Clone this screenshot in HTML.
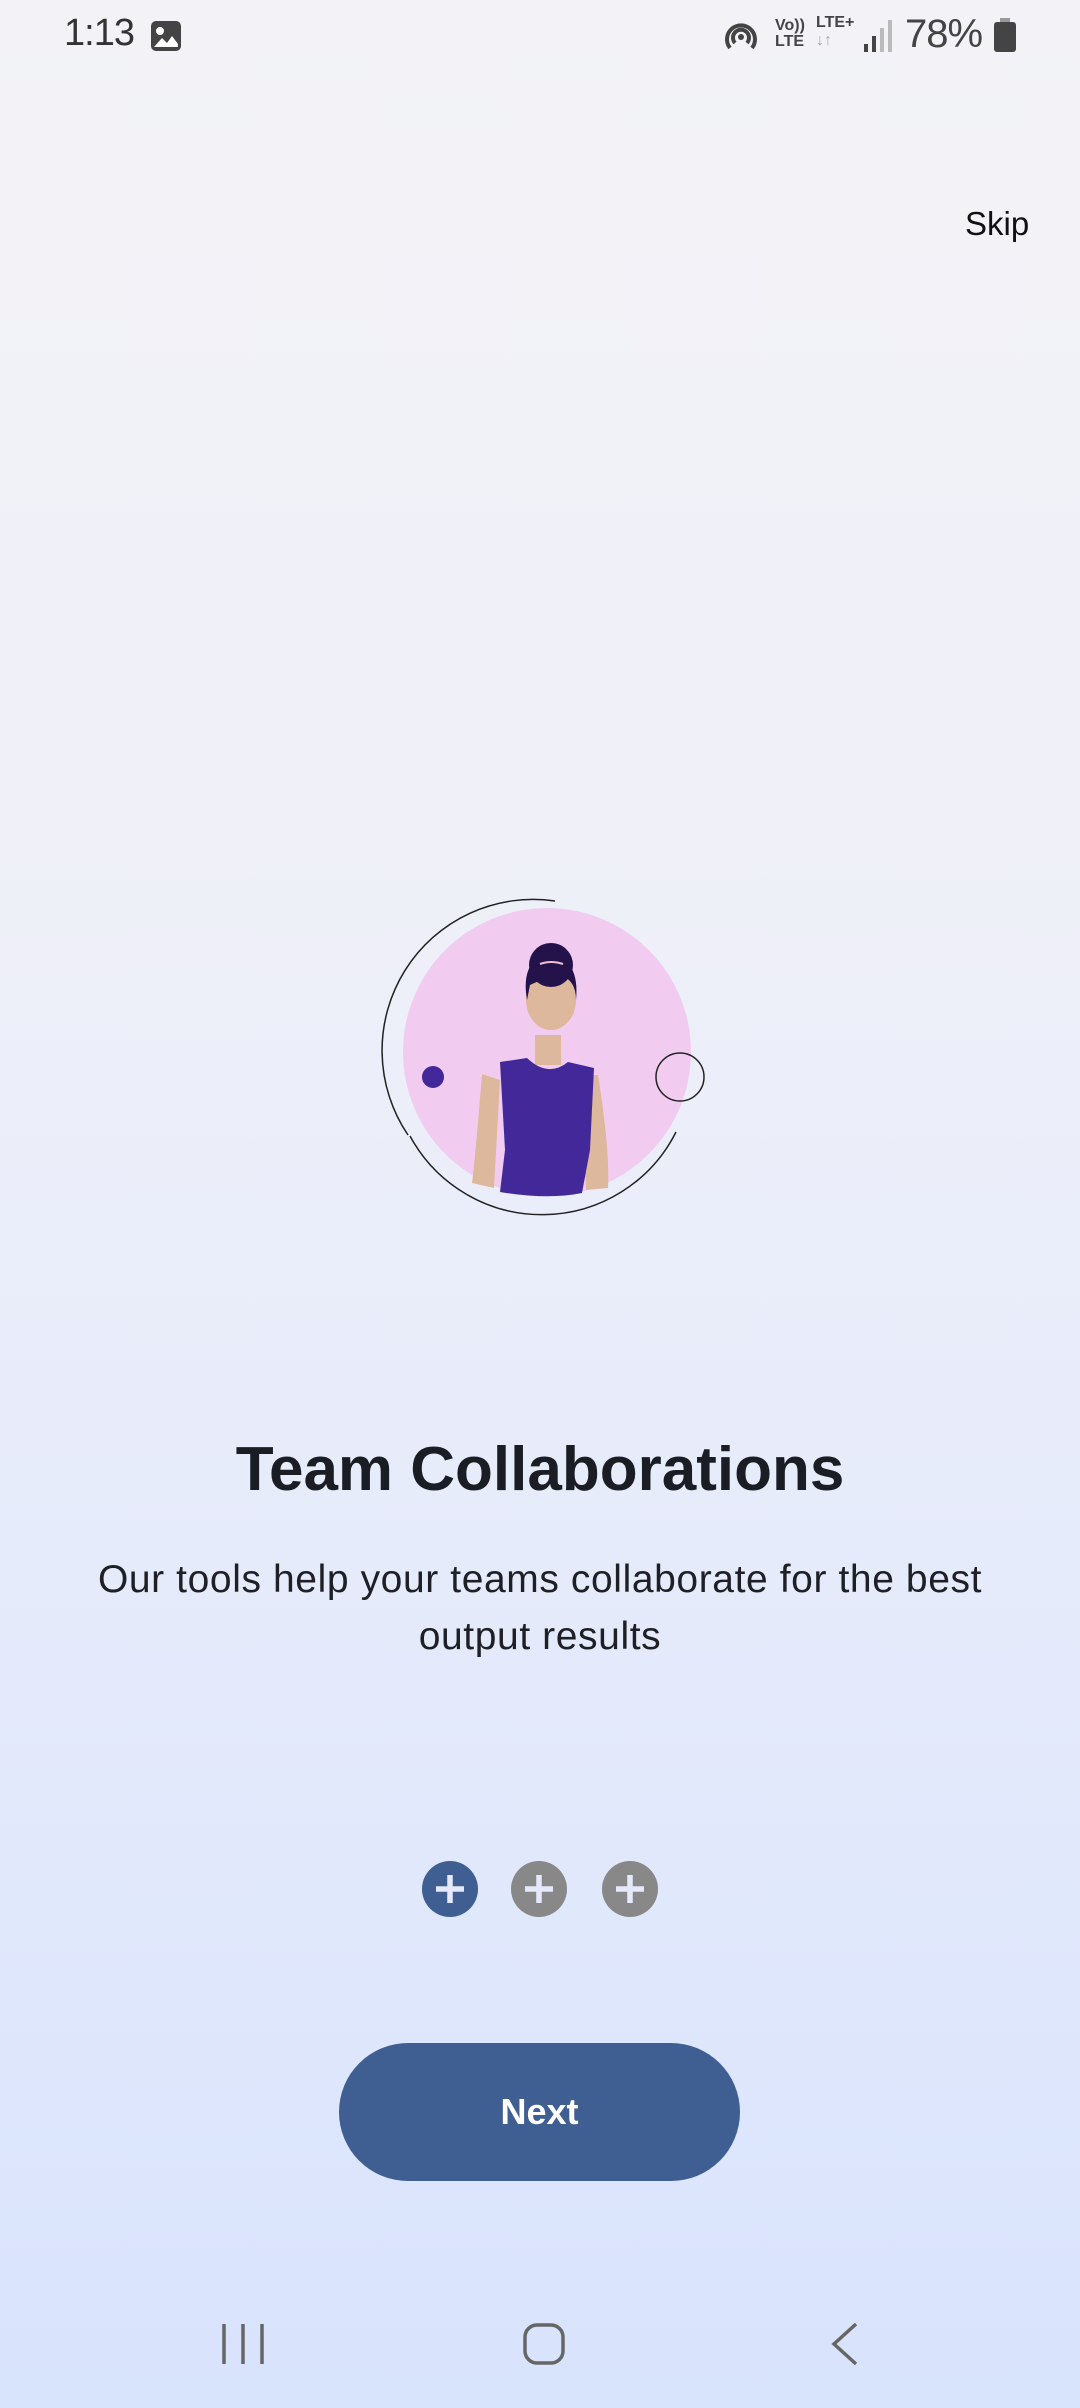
<!DOCTYPE html>
<html><head><meta charset="utf-8"><style>
body{margin:0;width:1080px;height:2408px;overflow:hidden;font-family:"Liberation Sans",Roboto,sans-serif;background:linear-gradient(180deg,#f3f3f7 0%,#eff0f8 35%,#e6ebfb 65%,#d8e3fc 100%);position:relative}
.a{position:absolute}
</style></head><body>
<div class="a" style="left:64px;top:12px;font-size:38px;color:#333;letter-spacing:-1px">1:13</div>
<svg class="a" style="left:150px;top:20px" width="32" height="32" viewBox="0 0 32 32"><rect x="1" y="1" width="30" height="30" rx="5" fill="#444"/><circle cx="10" cy="11" r="4" fill="#fff"/><path d="M4 27 L12 18 L17 23 L22 16 L28 24 L28 27 Z" fill="#fff"/></svg>
<svg class="a" style="left:722px;top:18px" width="38" height="36" viewBox="0 0 38 36"><g fill="none" stroke="#444" stroke-width="4"><path d="M8 30 A14 14 0 1 1 30 30"/><path d="M13 25 A8 8 0 1 1 25 25"/></g><circle cx="19" cy="19" r="3" fill="#444"/></svg>
<div class="a" style="left:775px;top:18px;font-size:16px;line-height:16px;color:#444;font-weight:bold">Vo))<br>LTE</div>
<div class="a" style="left:816px;top:14px;font-size:16px;line-height:18px;color:#444;font-weight:bold">LTE+<br><span style="color:#aaa">↓↑</span></div>
<svg class="a" style="left:864px;top:20px" width="30" height="32"><rect x="0" y="24" width="4" height="8" fill="#444"/><rect x="8" y="16" width="4" height="16" fill="#444"/><rect x="16" y="8" width="4" height="24" fill="#bbb"/><rect x="24" y="0" width="4" height="32" fill="#bbb"/></svg>
<div class="a" style="left:905px;top:12px;font-size:40px;color:#444;letter-spacing:-1px">78%</div>
<svg class="a" style="left:994px;top:18px" width="22" height="34"><rect x="6" y="0" width="10" height="4" fill="#999"/><rect x="0" y="4" width="22" height="30" rx="3" fill="#444"/></svg>
<div class="a" style="left:965px;top:205px;font-size:33px;color:#111">Skip</div>
<svg class="a" style="left:380px;top:880px" width="340" height="340" viewBox="380 880 340 340">
<circle cx="547" cy="1052" r="144" fill="#f2ccf0"/>
<path d="M555 901 A151 151 0 0 0 408 1135" fill="none" stroke="#222" stroke-width="1.5"/>
<path d="M410 1136 A150 150 0 0 0 676 1132" fill="none" stroke="#222" stroke-width="1.5"/>
<circle cx="433" cy="1077" r="11" fill="#43289a"/>
<circle cx="680" cy="1077" r="24" fill="none" stroke="#222" stroke-width="1.5"/>
<path d="M482 1074 Q476 1150 472 1183 L494 1188 L500 1080 Z" fill="#ddb89d"/>
<path d="M598 1075 Q610 1150 608 1188 L586 1190 L582 1075 Z" fill="#ddb89d"/>
<rect x="535" y="1035" width="26" height="30" fill="#ddb89d"/>
<path d="M500 1062 L527 1058 Q548 1078 568 1062 L594 1068 L590 1150 L582 1193 Q548 1200 500 1192 L505 1150 Z" fill="#43289a"/>
<ellipse cx="551" cy="1000" rx="25" ry="30" fill="#ddb89d"/>
<path d="M527 1000 Q520 960 550 952 Q580 960 576 1000 Q576 980 560 975 Q540 980 530 985 Z" fill="#23134a"/>
<circle cx="551" cy="965" r="22" fill="#23134a"/>
<path d="M540 964 Q551 960 563 964" stroke="#f0c0d0" stroke-width="2" fill="none"/>
</svg>
<div class="a" style="left:0;width:1080px;top:1434px;text-align:center;font-size:62px;font-weight:bold;color:#1a1d24">Team Collaborations</div>
<div class="a" style="left:60px;width:960px;top:1551px;text-align:center;font-size:39px;line-height:57px;color:#1e2026;letter-spacing:0.6px">Our tools help your teams collaborate for the best output results</div>
<svg class="a" style="left:400px;top:1860px" width="280" height="60"><g><circle cx="50" cy="29" r="28" fill="#3f5e91"/><circle cx="139" cy="29" r="28" fill="#888"/><circle cx="230" cy="29" r="28" fill="#888"/></g><g stroke="#e5e9fb" stroke-width="5.5"><path d="M50 15v28M36 29h28M139 15v28M125 29h28M230 15v28M216 29h28"/></g></svg>
<div class="a" style="left:339px;top:2043px;width:401px;height:138px;border-radius:69px;background:#3f5e91;color:#fff;font-size:36px;font-weight:bold;text-align:center;line-height:138px">Next</div>
<svg class="a" style="left:220px;top:2320px" width="660" height="48"><g stroke="#666" stroke-width="3.5" fill="none"><path d="M4 4v40M23 4v40M42 4v40"/><rect x="305" y="5" width="38" height="38" rx="12"/><path d="M636 4 L614 24 L636 44"/></g></svg>
</body></html>
